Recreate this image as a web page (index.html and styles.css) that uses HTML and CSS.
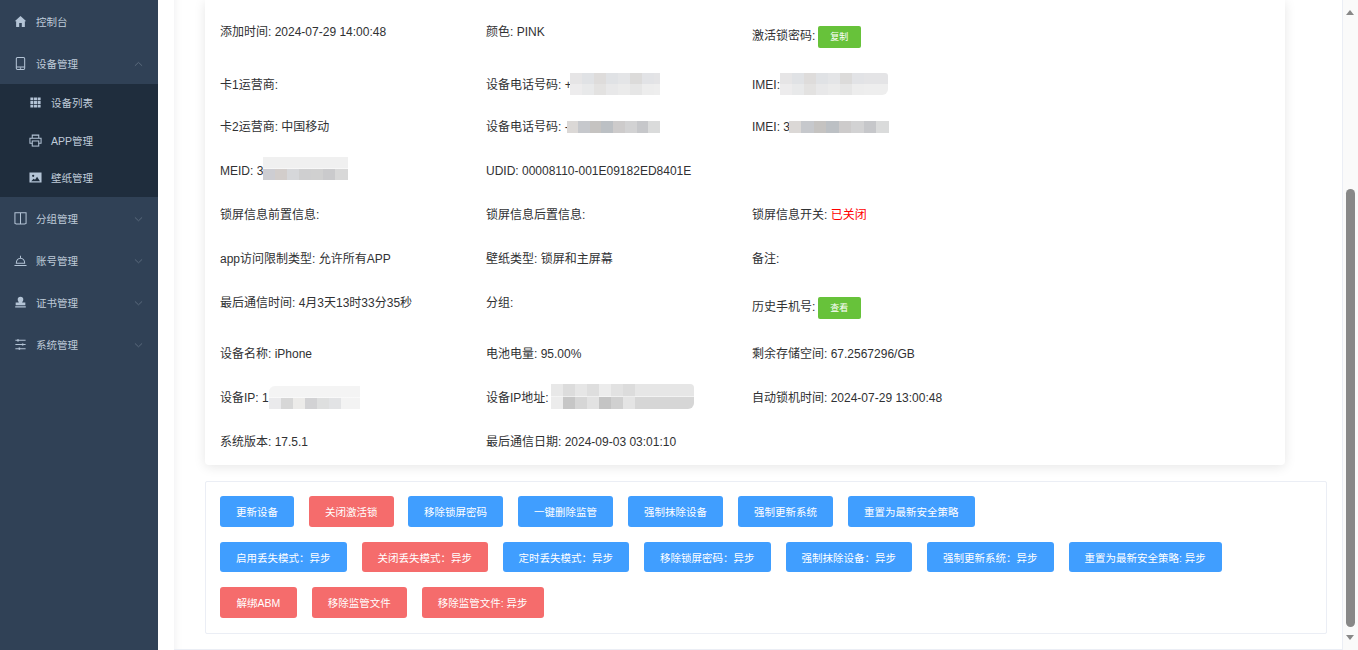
FILE: index.html
```html
<!DOCTYPE html>
<html lang="zh-CN">
<head>
<meta charset="utf-8">
<title>设备详情</title>
<link rel="stylesheet" href="styles.css">
</head>
<body>
<div class="app">
  <aside class="sidebar">
    <nav class="menu">
      <a class="item first"><svg class="ico" viewBox="0 0 14 14"><path d="M7 1 .8 6.800H2.300V13h3.300V8.600h2.800V13h3.300V6.800h1.500z"/></svg><span>控制台</span></a>
      <a class="item open"><svg class="ico line" viewBox="0 0 14 14"><rect x="2.500" y=".6" width="9" height="12.800" rx="1.200"/><path d="M2.500 10.800h9M6.300 12.200h1.400"/></svg><span>设备管理</span><svg class="chev" viewBox="0 0 10 6"><path d="M1 5 5 1.200 9 5"/></svg></a>
      <div class="sub">
        <a class="subitem s1"><svg class="ico" viewBox="0 0 14 14"><path d="M1.500 1.500h3.200v3.200H1.500zM5.400 1.500h3.200v3.200H5.400zM9.300 1.500h3.200v3.200H9.300zM1.500 5.400h3.200v3.200H1.500zM5.400 5.400h3.200v3.200H5.400zM9.300 5.400h3.200v3.200H9.300zM1.500 9.300h3.200v3.200H1.500zM5.400 9.300h3.200v3.200H5.400zM9.300 9.300h3.200v3.200H9.300z"/></svg><span>设备列表</span></a>
        <a class="subitem s2"><svg class="ico line" viewBox="0 0 14 14"><path d="M3.500 4.500V1.200h7v3.300M3.500 10H1V4.500h12V10h-2.500"/><rect x="3.500" y="7.500" width="7" height="5.500"/></svg><span>APP管理</span></a>
        <a class="subitem s3"><svg class="ico" viewBox="0 0 14 14"><path fill-rule="evenodd" d="M.5 1.500h13v11H.5zM4.500 4a1.200 1.200 0 1 0 0 2.400 1.200 1.200 0 0 0 0-2.400zM2.300 11h9.500L8.700 6.300 6.500 9.500 5 8.300z"/></svg><span>壁纸管理</span></a>
      </div>
      <a class="item g1"><svg class="ico line" viewBox="0 0 14 14"><path d="M1 .8h12v11.400l-1.500.8H2.500L1 12.200zM7 .8V13"/></svg><span>分组管理</span><svg class="chev" viewBox="0 0 10 6"><path d="M1 1.200 5 5 9 1.200"/></svg></a>
      <a class="item"><svg class="ico line" viewBox="0 0 14 14"><path d="M2.500 10c0-3.200 2-5.500 4.500-5.500S11.500 6.800 11.500 10zM.5 12.500h13M7 2v2.500"/></svg><span>账号管理</span><svg class="chev" viewBox="0 0 10 6"><path d="M1 1.200 5 5 9 1.200"/></svg></a>
      <a class="item"><svg class="ico" viewBox="0 0 14 14"><path d="M7 .8a3 3 0 0 1 3 3c0 1.500-.9 2.200-1.300 3.300h3.500V10H1.800V7.100h3.500C4.900 6 4 5.300 4 3.800a3 3 0 0 1 3-3zM1.300 11h11.400v1.400H1.300z"/></svg><span>证书管理</span><svg class="chev" viewBox="0 0 10 6"><path d="M1 1.200 5 5 9 1.200"/></svg></a>
      <a class="item"><svg class="ico line" viewBox="0 0 14 14"><path d="M1.500 2.500h11M1.500 7h11M1.500 11.500h11"/><path class="fill" d="M3.500 1.300h1.600v2.400H3.500zM8.500 5.800h1.600v2.400H8.500zM5 10.300h1.600v2.400H5z"/></svg><span>系统管理</span><svg class="chev" viewBox="0 0 10 6"><path d="M1 1.200 5 5 9 1.200"/></svg></a>
    </nav>
  </aside>

  <main class="main">
    <div class="wrap">
      <section class="info">
        <div class="row r1">
          <div class="cell">添加时间: 2024-07-29 14:00:48</div>
          <div class="cell">颜色: PINK</div>
          <div class="cell low">激活锁密码: <button class="mini">复制</button></div>
        </div>
        <div class="row r2">
          <div class="cell">卡1运营商:</div>
          <div class="cell">设备电话号码: +<span class="blur two b-phone"></span></div>
          <div class="cell">IMEI:<span class="blur two b-imei"></span></div>
        </div>
        <div class="row">
          <div class="cell">卡2运营商: 中国移动</div>
          <div class="cell">设备电话号码: -<span class="blur dark b-phone2"></span></div>
          <div class="cell">IMEI: 3<span class="blur dark b-imei2"></span></div>
        </div>
        <div class="row">
          <div class="cell">MEID: 3<span class="blur b-meid"></span></div>
          <div class="cell">UDID: 00008110-001E09182ED8401E</div>
          <div class="cell"></div>
        </div>
        <div class="row">
          <div class="cell">锁屏信息前置信息:</div>
          <div class="cell">锁屏信息后置信息:</div>
          <div class="cell">锁屏信息开关: <span class="off">已关闭</span></div>
        </div>
        <div class="row">
          <div class="cell">app访问限制类型: 允许所有APP</div>
          <div class="cell">壁纸类型: 锁屏和主屏幕</div>
          <div class="cell">备注:</div>
        </div>
        <div class="row r7">
          <div class="cell">最后通信时间: 4月3天13时33分35秒</div>
          <div class="cell">分组:</div>
          <div class="cell low">历史手机号: <button class="mini">查看</button></div>
        </div>
        <div class="row">
          <div class="cell">设备名称: iPhone</div>
          <div class="cell">电池电量: 95.00%</div>
          <div class="cell">剩余存储空间: 67.2567296/GB</div>
        </div>
        <div class="row">
          <div class="cell">设备IP: 1<span class="blur b-ip"></span></div>
          <div class="cell">设备IP地址:<span class="blur b-addr"></span></div>
          <div class="cell">自动锁机时间: 2024-07-29 13:00:48</div>
        </div>
        <div class="row">
          <div class="cell">系统版本: 17.5.1</div>
          <div class="cell">最后通信日期: 2024-09-03 03:01:10</div>
          <div class="cell"></div>
        </div>
      </section>

      <section class="actions">
        <div class="btns tight">
          <button class="btn blue">更新设备</button>
          <button class="btn red">关闭激活锁</button>
          <button class="btn blue">移除锁屏密码</button>
          <button class="btn blue">一键删除监管</button>
          <button class="btn blue">强制抹除设备</button>
          <button class="btn blue">强制更新系统</button>
          <button class="btn blue">重置为最新安全策略</button>
        </div>
        <div class="btns tight short">
          <button class="btn blue">启用丢失模式：异步</button>
          <button class="btn red">关闭丢失模式：异步</button>
          <button class="btn blue">定时丢失模式：异步</button>
          <button class="btn blue">移除锁屏密码：异步</button>
          <button class="btn blue">强制抹除设备：异步</button>
          <button class="btn blue">强制更新系统：异步</button>
          <button class="btn blue">重置为最新安全策略: 异步</button>
        </div>
        <div class="btns wide">
          <button class="btn red">解绑ABM</button>
          <button class="btn red">移除监管文件</button>
          <button class="btn red">移除监管文件: 异步</button>
        </div>
      </section>
    </div>
  </main>

  <div class="scrollbar">
    <span class="arrow up"></span>
    <span class="thumb"></span>
    <span class="arrow down"></span>
  </div>
</div>
</body>
</html>
```

FILE: styles.css
```css
* { box-sizing: border-box; }
html, body { margin: 0; height: 100%; overflow: hidden; background: #fff; }
body { font-family: "Liberation Sans", "Noto Sans CJK SC", sans-serif; font-size: 12px; color: #303133; }
.app { position: relative; display: flex; width: 1358px; height: 650px; overflow: hidden; }

/* sidebar */
.sidebar { flex: 0 0 158px; background: #304156; color: #bfcbd9; font-size: 10.5px; }
.menu { display: flex; flex-direction: column; }
.item { display: flex; align-items: center; height: 42px; padding-left: 14px; }
.item.first { height: 43px; }
.item.open { height: 41px; }
.item span { margin-left: 9px; }
.g1 { margin-top: 1px; }
.ico { width: 13px; height: 13px; flex: none; fill: #b4c4d6; }
.ico.line { fill: none; stroke: #b4c4d6; stroke-width: 1.1; }
.ico .fill { fill: #b4c4d6; stroke: none; }
.chev { width: 9px; height: 6px; margin-left: auto; margin-right: 15px; fill: none; stroke: #5f6e80; stroke-width: 1; }
.sub { display: flex; flex-direction: column; background: #1f2d3d; }
.subitem { display: flex; align-items: center; height: 37.5px; padding-left: 29px; }
.subitem span { margin-left: 9px; }

/* main */
.main { flex: 0 0 1185px; padding-left: 16px; height: 650px; }
.wrap { height: 650px; width: 1169px; padding-left: 31px; border-right: 1px solid #ebeef5; border-bottom: 1px solid #ebeef5; box-shadow: inset 10px 0 10px -10px rgba(0, 0, 40, .08); }
.info { width: 1080px; height: 465px; padding: 10px 0 0 15px; background: #fff; border-radius: 0 0 4px 4px; box-shadow: 0 2px 12px rgba(0, 0, 0, .1); }
.row { display: grid; grid-template-columns: 266px 266px 266px; height: 44px; line-height: 44px; }
.r1 { height: 53px; }
.r2 { height: 42px; }
.r7 { height: 51px; }
.cell { white-space: nowrap; }
.low { padding-top: 4px; }
.off { color: #f00; }
.mini { display: inline-block; height: 22px; width: 43px; margin-left: -1px; padding: 0; border: 0; border-radius: 2px; background: #67c23a; color: #fff; font: 9px "Liberation Sans", "Noto Sans CJK SC", sans-serif; line-height: 22px; }

/* mosaics */
.blur { display: inline-block; background-repeat: no-repeat; background-size: 100% 50%; background-position: top, bottom; }
.two {
  height: 22px;
  vertical-align: -6px;
  background-image:
    linear-gradient(90deg, #e6e5e6 0 12px, #e0e2e5 12px 24px, #dedcdb 24px 36px, #e0e2e5 36px 48px, #e4e5e7 48px 60px, #dcdbda 60px 72px, #e2e3e6 72px 84px, #e4e4e6 84px 100%),
    linear-gradient(90deg, #edeced 0 12px, #e8e9ea 12px 24px, #e3e2e1 24px 36px, #e8e8e9 36px 48px, #ebebeb 48px 60px, #e6e6e6 60px 72px, #ededed 72px 84px, #eeeeee 84px 100%);
}
.dark { height: 12px; vertical-align: -2px; background-size: 100% 100%; background-image: linear-gradient(90deg, #dbd8d6 0 12%, #c6c8cc 12% 25%, #c5c3c1 25% 37%, #bcc0c4 37% 50%, #cdcbcb 50% 62%, #d2d2d3 62% 75%, #c6c7ca 75% 87%, #dadbdb 87% 100%); }
.b-phone { width: 90px; margin-left: -2px; }
.b-imei { width: 108px; border-top-right-radius: 3px; border-bottom-right-radius: 6px; }
.b-phone2 { width: 93px; margin-left: -2px; }
.b-imei2 { width: 100px; margin-left: -1px; }
.b-meid {
  width: 85px;
  height: 23px;
  vertical-align: -5px;
  background-image:
    linear-gradient(90deg, #f0f0f0 0 100%),
    linear-gradient(90deg, #cdcdd2 0 12px, #d2cdcb 12px 24px, #d6d7da 24px 36px, #cfcfd0 36px 48px, #d0d0d0 48px 60px, #cacacc 60px 72px, #d8d8d8 72px 100%);
}
.b-ip {
  width: 91px;
  height: 23px;
  vertical-align: -7px;
  border-top-left-radius: 6px;
  background-image:
    linear-gradient(90deg, #f4f4f4 0 100%),
    linear-gradient(90deg, #eaeaec 0 12px, #d7d7d7 12px 24px, #ecebe9 24px 36px, #d2d2d4 36px 48px, #dedfdf 48px 60px, #e2e3e5 60px 72px, #f3f3f3 72px 100%);
}
.b-addr {
  width: 143px;
  height: 25px;
  margin-left: 2px;
  vertical-align: -7px;
  border-top-right-radius: 4px;
  border-bottom-right-radius: 6px;
  background-image:
    linear-gradient(90deg, #e8e8e8 0 12px, #dcdcdc 12px 24px, #e6e6e6 24px 36px, #dedede 36px 48px, #ececec 48px 60px, #e2e2e2 60px 72px, #dcdcdc 72px 84px, #e6e6e6 84px 100%),
    linear-gradient(90deg, #ececec 0 12px, #c6c6c6 12px 24px, #d6d6d6 24px 36px, #e2e2e2 36px 48px, #c4c4c4 48px 60px, #d0d0d0 60px 72px, #e4e4e4 72px 84px, #d6d6d6 84px 100%);
}

/* action panel */
.actions { width: 1122px; height: 153px; margin-top: 16px; padding: 14px; background: #fff; border: 1px solid #ebeef5; border-radius: 2px; }
.btns { display: flex; gap: 15px; height: 31px; margin-bottom: 15px; }
.btns.short { height: 30px; }
.btn { height: 100%; padding: 0 16px; border: 0; border-radius: 3px; color: #fff; font: 10.5px "Liberation Sans", "Noto Sans CJK SC", sans-serif; white-space: nowrap; }
.blue { background: #409eff; }
.red { background: #f56c6c; }
.tight .red { margin-right: -.5px; }
.wide .btn:first-child { padding: 0 16.5px; }

/* window scrollbar */
.scrollbar { position: absolute; top: 0; right: 0; width: 15px; height: 650px; background: #fafafa; }
.thumb { position: absolute; left: 3px; top: 189px; width: 9px; height: 438px; border-radius: 5px; background: #888; }
.arrow { position: absolute; left: 3px; width: 0; height: 0; border-left: 4.5px solid transparent; border-right: 4.5px solid transparent; }
.up { top: 10px; border-bottom: 5px solid #888; }
.down { top: 635px; border-top: 5px solid #888; }
```
